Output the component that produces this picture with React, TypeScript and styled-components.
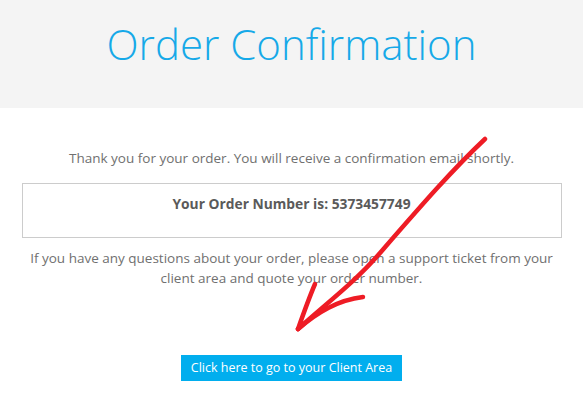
import { createGlobalStyle } from 'styled-components';
import styled from 'styled-components';

const GlobalStyle = createGlobalStyle`
  html, body {
    margin: 0;
    padding: 0;
    background: #fff;
  }
  body {
    font-family: 'Open Sans', 'Liberation Sans', sans-serif;
  }
`;

const Page = styled.div`
  position: relative;
  width: 583px;
  height: 416px;
  overflow: hidden;
`;

const Header = styled.header`
  height: 108px;
  background: #f4f4f4;
  display: flex;
  justify-content: center;
`;

const Title = styled.h1`
  margin: 15px 0 0;
  font-weight: 300;
  font-size: 42px;
  line-height: 58px;
  color: #16a9e8;
`;

const Content = styled.main`
  display: flex;
  flex-direction: column;
  align-items: center;
  padding-top: 40px;
`;

const Text = styled.p`
  margin: 0;
  font-size: 13.5px;
  line-height: 20px;
  color: #707070;
  text-align: center;
`;

const OrderBox = styled.div`
  margin-top: 15px;
  width: 540px;
  height: 55px;
  box-sizing: border-box;
  border: 1px solid #ccc;
  padding-top: 10px;
  text-align: center;
  font-size: 13.8px;
  font-weight: 700;
  color: #5a5a5a;
`;

const Notice = styled(Text)`
  margin-top: 10px;
  width: 528px;
`;

const Button = styled.a`
  display: inline-block;
  margin-top: 67px;
  padding: 0 10px;
  height: 26px;
  line-height: 26px;
  background: #01aeee;
  color: #fff;
  font-size: 12.5px;
  text-decoration: none;
`;

const Arrow = styled.svg`
  position: absolute;
  left: 0;
  top: 0;
  pointer-events: none;
`;

export default function App() {
  return (
    <Page>
      <GlobalStyle />
      <Header>
        <Title>Order Confirmation</Title>
      </Header>
      <Content>
        <Text>Thank you for your order. You will receive a confirmation email shortly.</Text>
        <OrderBox>Your Order Number is: 5373457749</OrderBox>
        <Notice>
          If you have any questions about your order, please open a support ticket from your
          client area and quote your order number.
        </Notice>
        <Button href="#">Click here to go to your Client Area</Button>
      </Content>
      <Arrow width="583" height="416" viewBox="0 0 583 416">
        <g fill="none" stroke="#ee1c25" strokeWidth="4.5" strokeLinecap="round" strokeLinejoin="round">
          <path d="M485 139 C 452 170, 420 207, 380 253 C 355 282, 328 302, 298 329" />
          <path d="M298 329 C 304 312, 309 298, 315 284" />
          <path d="M298 329 C 318 312, 338 300, 363 297" />
        </g>
      </Arrow>
    </Page>
  );
}
